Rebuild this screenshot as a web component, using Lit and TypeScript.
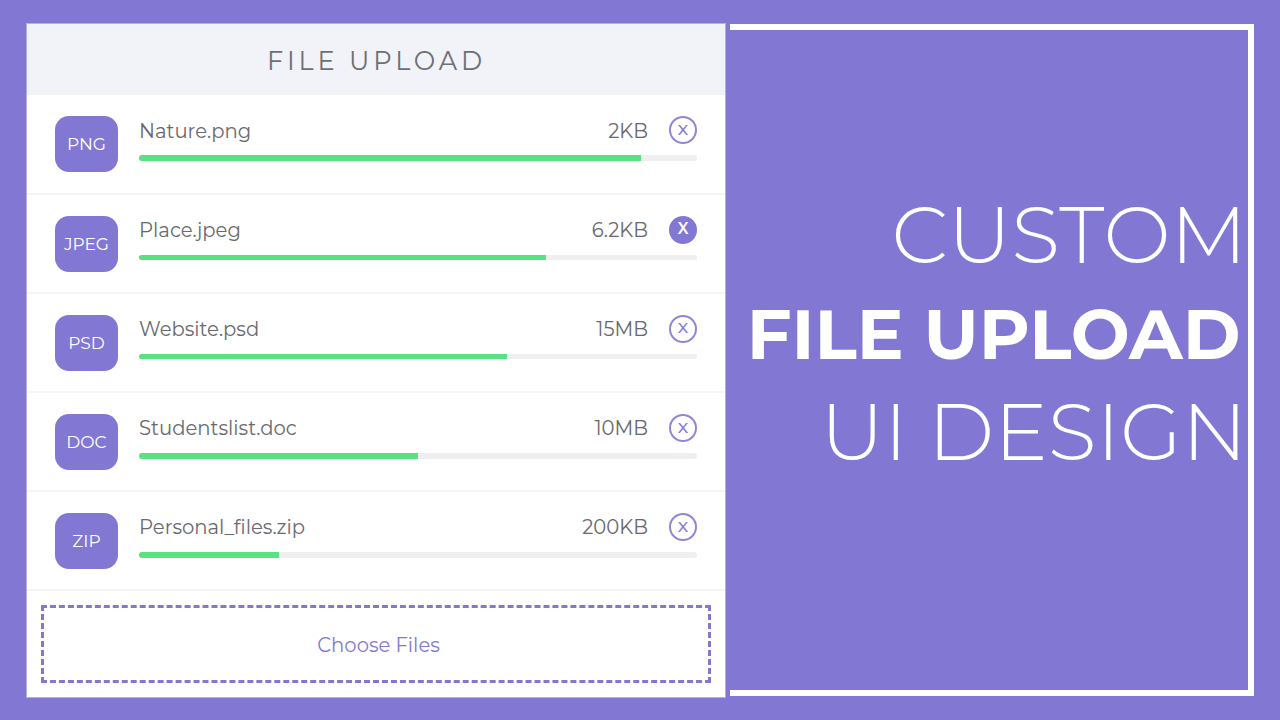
import { LitElement, html, css } from "lit";
import { customElement, property } from "lit/decorators.js";

interface UploadItem {
  type: string;
  name: string;
  size: string;
  progress: number;
  active?: boolean;
}

const ITEMS: UploadItem[] = [
  { type: "PNG", name: "Nature.png", size: "2KB", progress: 90 },
  { type: "JPEG", name: "Place.jpeg", size: "6.2KB", progress: 73, active: true },
  { type: "PSD", name: "Website.psd", size: "15MB", progress: 66 },
  { type: "DOC", name: "Studentslist.doc", size: "10MB", progress: 50 },
  { type: "ZIP", name: "Personal_files.zip", size: "200KB", progress: 25 },
];

@customElement("upload-row")
export class UploadRow extends LitElement {
  @property({ attribute: false }) item!: UploadItem;

  static styles = css`
    :host {
      display: flex;
      box-sizing: border-box;
      height: 99.2px;
      padding: 21px 28px 0 28px;
      border-bottom: 2px solid #f5f5f6;
      gap: 21px;
    }
    .type {
      display: flex;
      align-items: center;
      justify-content: center;
      width: 63px;
      height: 56px;
      border-radius: 14px;
      background: #8278d3;
      color: #fff;
      font-size: 17px;
      flex: none;
    }
    .body { flex: 1; }
    .info { display: flex; align-items: center; height: 28px; color: #67696f; font-size: 19.6px; }
    .name, .size { padding-top: 0.6px; }
    .size { margin-left: auto; margin-right: 21px; }
    .remove {
      display: flex;
      align-items: center;
      justify-content: center;
      box-sizing: border-box;
      width: 28px;
      height: 28px;
      border: 2px solid #8f86d8;
      border-radius: 50%;
      color: #8278d3;
      font-size: 15.5px;
      font-weight: 500;
      line-height: 18px;
      padding-bottom: 1px;
    }
    .remove.active { background: #8278d3; border-color: #8278d3; color: #fff; font-weight: 600; }
    .track { height: 5.5px; margin-top: 11px; border-radius: 3px; background: #efefef; overflow: hidden; }
    .fill { height: 100%; background: #57e37f; }
  `;

  render() {
    const i = this.item;
    return html`
      <div class="type">${i.type}</div>
      <div class="body">
        <div class="info">
          <span class="name">${i.name}</span>
          <span class="size">${i.size}</span>
          <span class="remove ${i.active ? "active" : ""}">X</span>
        </div>
        <div class="track"><div class="fill" style="width:${i.progress}%"></div></div>
      </div>
    `;
  }
}

@customElement("app-root")
export class AppRoot extends LitElement {
  static styles = css`
    :host {
      display: flex;
      box-sizing: border-box;
      width: 1280px;
      height: 720px;
      padding: 24px 26px 24px 27px;
      gap: 5px;
      background: #8278d3;
      font-family: Montserrat, Inter, "Open Sans", sans-serif;
      font-weight: 400;
      overflow: hidden;
    }
    .card {
      display: flex;
      flex-direction: column;
      width: 698px;
      height: 672.5px;
      background: #fff;
      box-shadow: 0 0 0 1px rgba(255, 255, 255, 0.4);
      flex: none;
    }
    .header {
      display: flex;
      justify-content: center;
      align-items: center;
      height: 71.45px;
      flex: none;
      padding: 1px 0 0 1px;
      box-sizing: border-box;
      background: #f2f3f8;
      color: #6d6f75;
      font-size: 25.6px;
      font-weight: 400;
      letter-spacing: 3.85px;
    }
    .drop { flex: 1; display: flex; padding: 14px; }
    .choose {
      flex: 1;
      display: flex;
      align-items: center;
      justify-content: center;
      border: 3px dashed #8278d3;
      color: #8278d3;
      font-size: 19.6px;
      padding: 2px 0 0 5px;
    }
    .promo {
      flex: 1;
      display: flex;
      flex-direction: column;
      align-items: flex-end;
      box-sizing: border-box;
      height: 672px;
      padding: 155px 1px 0 0;
      border: 6px solid #fff;
      border-left: 0;
      color: #fff;
      white-space: nowrap;
    }
    .thin { font-size: 80px; font-weight: 300; line-height: 100px; }
    .bold { font-size: 70px; font-weight: 700; line-height: 97px; margin: 1px 6.5px -1px 0; }
  `;

  render() {
    return html`
      <section class="card">
        <div class="header">FILE UPLOAD</div>
        ${ITEMS.map((item) => html`<upload-row .item=${item}></upload-row>`)}
        <div class="drop"><div class="choose">Choose Files</div></div>
      </section>
      <section class="promo">
        <div class="thin">CUSTOM</div>
        <div class="bold">FILE UPLOAD</div>
        <div class="thin">UI DESIGN</div>
      </section>
    `;
  }
}
